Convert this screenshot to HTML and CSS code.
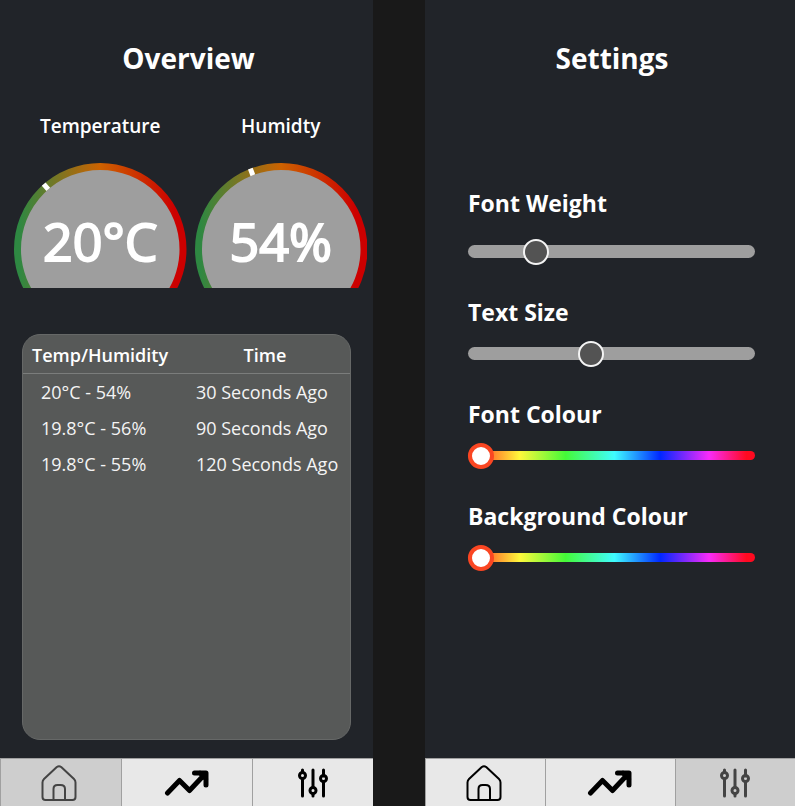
FILE: index.html
```html
<!DOCTYPE html>
<html lang="en">
<head>
<meta charset="utf-8">
<title>Climate monitor</title>
<link rel="stylesheet" href="styles.css">
</head>
<body>
<svg class="sprite" aria-hidden="true">
  <defs>
    <linearGradient id="heat" gradientUnits="userSpaceOnUse" x1="0" y1="0" x2="173" y2="0">
      <stop offset="0.03" stop-color="#2e8842"/>
      <stop offset="0.5" stop-color="#cd6200"/>
      <stop offset="0.93" stop-color="#cc0000"/>
    </linearGradient>
    <symbol id="home" viewBox="0 0 36 36">
      <path d="M1.5 17.5Q1.5 15.5 3 14L15.8 2Q18 .4 20.2 2L33 14Q34.500 15.500 34.500 17.500V32Q34.500 35 31.500 35H4.500Q1.500 35 1.500 32Z"/>
      <path d="M12.500 34.500V24Q12.500 20 16.500 20H19.500Q24 20 24 24V34.500"/>
    </symbol>
    <symbol id="trend" viewBox="0 0 46 28">
      <path d="M3.500 24L15.500 11.500L25.500 21.500L41 5M30.500 4H42V16M36 4L42 10"/>
    </symbol>
    <symbol id="sliders" viewBox="0 0 30 30">
      <path d="M4.500 2V4M4.500 11V28M15 2V19M15 26V28M25.500 2V8M25.500 14V28"/>
      <circle cx="4.500" cy="7.500" r="3"/>
      <circle cx="15" cy="22.500" r="3"/>
      <circle cx="25.500" cy="10.500" r="3"/>
    </symbol>
  </defs>
</svg>

<main class="screens">
  <section class="screen">
    <h1 class="title">Overview</h1>
    <div class="gauges">
      <div class="gauge">
        <h2 class="gauge-label">Temperature</h2>
        <div class="dial">
          <svg class="dial-face" viewBox="0 0 173 125" aria-hidden="true">
            <circle cx="86.500" cy="86.500" r="83" fill="#9e9e9e" stroke="url(#heat)" stroke-width="7"/>
            <path class="marker" d="M86.500 0V7" transform="rotate(-41 86.500 86.500)"/>
          </svg>
          <span class="reading">20°C</span>
        </div>
      </div>
      <div class="gauge">
        <h2 class="gauge-label">Humidty</h2>
        <div class="dial">
          <svg class="dial-face" viewBox="0 0 173 125" aria-hidden="true">
            <circle cx="86.500" cy="86.500" r="83" fill="#9e9e9e" stroke="url(#heat)" stroke-width="7"/>
            <path class="marker" d="M86.500 0V7" transform="rotate(-21 86.500 86.500)"/>
          </svg>
          <span class="reading">54%</span>
        </div>
      </div>
    </div>
    <div class="card">
      <table class="history">
        <thead>
          <tr><th>Temp/Humidity</th><th class="time">Time</th></tr>
        </thead>
        <tbody>
          <tr><td>20°C - 54%</td><td>30 Seconds Ago</td></tr>
          <tr><td>19.8°C - 56%</td><td>90 Seconds Ago</td></tr>
          <tr><td>19.8°C - 55%</td><td>120 Seconds Ago</td></tr>
        </tbody>
      </table>
    </div>
    <nav class="tabs">
      <button class="tab active" type="button" aria-label="Overview"><svg class="icon home"><use href="#home"/></svg></button>
      <button class="tab" type="button" aria-label="Trends"><svg class="icon trend"><use href="#trend"/></svg></button>
      <button class="tab" type="button" aria-label="Settings"><svg class="icon sliders"><use href="#sliders"/></svg></button>
    </nav>
  </section>

  <section class="screen">
    <h1 class="title">Settings</h1>
    <form class="settings">
      <div class="field roomy">
        <label for="weight">Font Weight</label>
        <input id="weight" class="range" type="range" min="0" max="100" value="21">
      </div>
      <div class="field">
        <label for="size">Text Size</label>
        <input id="size" class="range" type="range" min="0" max="100" value="42">
      </div>
      <div class="field">
        <label for="font-colour">Font Colour</label>
        <input id="font-colour" class="range hue" type="range" min="0" max="360" value="0">
      </div>
      <div class="field">
        <label for="background-colour">Background Colour</label>
        <input id="background-colour" class="range hue" type="range" min="0" max="360" value="0">
      </div>
    </form>
    <nav class="tabs">
      <button class="tab" type="button" aria-label="Overview"><svg class="icon home"><use href="#home"/></svg></button>
      <button class="tab" type="button" aria-label="Trends"><svg class="icon trend"><use href="#trend"/></svg></button>
      <button class="tab active" type="button" aria-label="Settings"><svg class="icon sliders"><use href="#sliders"/></svg></button>
    </nav>
  </section>
</main>
</body>
</html>
```
FILE: styles.css
```css
* {
  box-sizing: border-box;
}

body {
  margin: 0;
  background: #191919;
  color: #fff;
  font-family: "Open Sans", "Noto Sans", sans-serif;
}

.sprite {
  position: absolute;
  width: 0;
  height: 0;
}

.screens {
  display: grid;
  grid-template-columns: 373fr 370fr;
  column-gap: 52px;
  min-height: 100vh;
}

.screen {
  display: flex;
  flex-direction: column;
  min-width: 0;
  background: #212429;
}

.title {
  margin: 40px 0 0;
  padding-left: 4px;
  text-align: center;
  font-size: 28px;
  line-height: 36px;
  font-weight: 700;
}

.settings + .tabs,
.card + .tabs {
  margin-top: auto;
}

/* Gauges */
.gauges {
  display: grid;
  grid-template-columns: 1fr 1fr;
  gap: 8px;
  margin-top: 36px;
  padding: 0 6px 0 14px;
}

.gauge-label {
  margin: 0 0 23px;
  text-align: center;
  font-size: 19px;
  line-height: 28px;
  font-weight: 600;
}

.dial {
  display: grid;
}

.dial-face,
.reading {
  grid-area: 1 / 1;
}

.dial-face {
  display: block;
  width: 100%;
}

.marker {
  stroke: #fff;
  stroke-width: 5;
}

.reading {
  align-self: center;
  padding-top: 32px;
  text-align: center;
  font-size: 52px;
  line-height: 60px;
  font-weight: 400;
  -webkit-text-stroke: 2px #fff;
}

/* History card */
.card {
  flex: 1;
  margin: 46px 22px 18px;
  border: 1px solid #666867;
  border-radius: 18px;
  background: #575958;
}

.history {
  width: 100%;
  border-collapse: collapse;
  font-size: 18px;
  line-height: 24px;
}

.history th {
  width: 48%;
  padding: 8px 9px 6px;
  border-bottom: 1px solid #7b7d7c;
  text-align: left;
  font-weight: 600;
  white-space: nowrap;
}

.history .time {
  width: 52%;
  text-align: center;
}

.history td {
  padding: 6px 0 6px 18px;
  color: #f4f4f4;
  white-space: nowrap;
}

.history td:last-child {
  padding-left: 16px;
}

/* Settings */
.settings {
  display: flex;
  flex-direction: column;
  gap: 32px;
  margin: 111px 40px 0 43px;
}

.field {
  display: flex;
  flex-direction: column;
  gap: 12px;
}

.field.roomy {
  gap: 19px;
}

.field label {
  font-size: 23px;
  line-height: 32px;
  font-weight: 700;
}

.range {
  appearance: none;
  width: 100%;
  height: 26px;
  margin: 0;
  background: none;
}

.range::-webkit-slider-runnable-track {
  height: 13px;
  border-radius: 7px;
  background: #9e9e9e;
}

.range::-webkit-slider-thumb {
  appearance: none;
  width: 26px;
  height: 26px;
  margin-top: -6px;
  border: 2px solid #f4f4f4;
  border-radius: 50%;
  background: #535353;
}

.hue::-webkit-slider-runnable-track {
  height: 9px;
  border-radius: 5px;
  background: linear-gradient(to right, #ff3b24 3%, #fff83b 18%, #44fa38 34%, #3ffcff 51%, #0027ff 67%, #f92bf9 84%, #ff0a20 97%);
}

.hue::-webkit-slider-thumb {
  margin-top: -8px;
  border: 4px solid #fa4622;
  background: #fff;
}

/* Bottom tabs */
.tabs {
  display: grid;
  grid-template-columns: 121fr 131fr 121fr;
  height: 48px;
  border-top: 1px solid #a0a0a0;
}

.tab {
  display: flex;
  align-items: center;
  justify-content: center;
  padding: 0;
  border: 0;
  border-left: 1px solid #a0a0a0;
  background: #e8e8e8;
  color: #000;
}

.tab:first-child {
  padding-right: 4px;
}

.tab.active {
  background: #cecece;
  color: #444;
}

.icon {
  fill: none;
  stroke: currentColor;
  stroke-linecap: round;
  stroke-linejoin: round;
}

.home {
  width: 36px;
  height: 36px;
  stroke-width: 2;
}

.trend {
  width: 46px;
  height: 28px;
  stroke-width: 5;
}

.sliders {
  width: 30px;
  height: 30px;
  stroke-width: 3;
}
```
